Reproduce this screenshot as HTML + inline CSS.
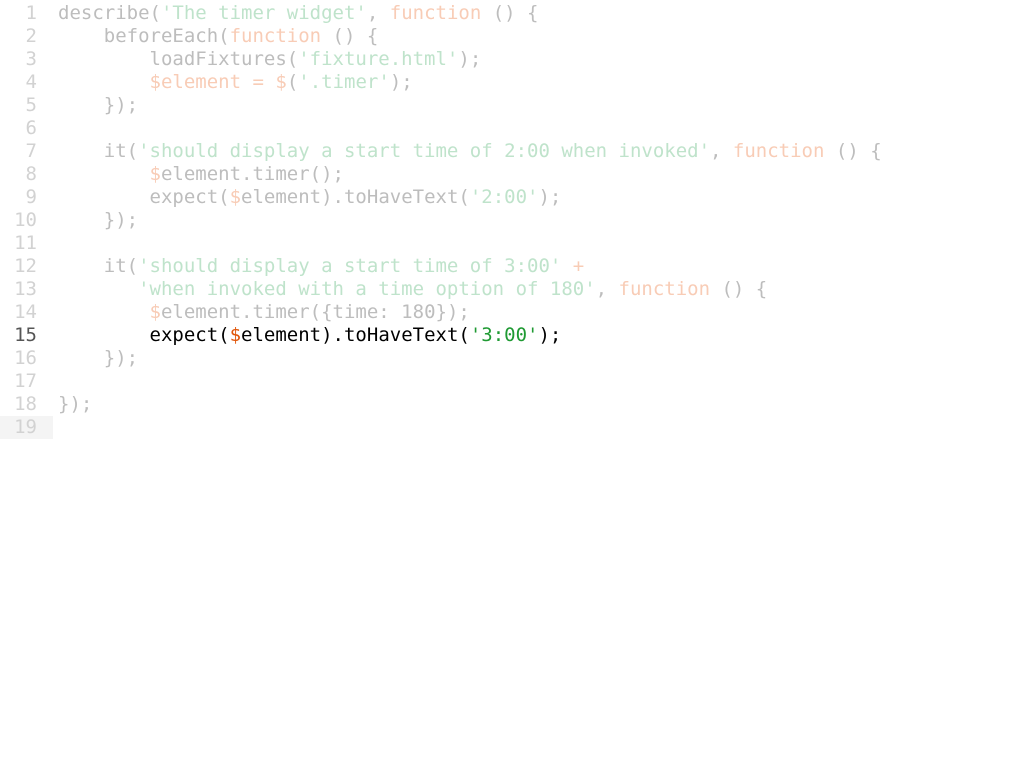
<!DOCTYPE html>
<html><head><style>
body{margin:0;background:#fff;width:1024px;height:768px;overflow:hidden}
.w{position:absolute;top:2px;left:0;font-family:"DejaVu Sans Mono","Liberation Mono",monospace;font-size:19px;line-height:23px;color:#bdbdbd}
.l{height:23px;position:relative;white-space:pre}
.n{display:inline-block;width:37px;text-align:right;color:#d2d2d2;margin-right:21px}
.s{color:#bfe3cb}.k{color:#f8ccb6}
.a{color:#000}.a .n{color:#555}.a .d{color:#e0560a}.a .s{color:#1f9a33}
.bg{position:absolute;left:0;top:0;width:53px;height:23px;background:#f4f4f4;z-index:-1}
</style></head><body>
<div class="w"><div class="l"><span class="n">1</span>describe(<span class="s">'The timer widget'</span>, <span class="k">function</span> () {</div><div class="l"><span class="n">2</span>    beforeEach(<span class="k">function</span> () {</div><div class="l"><span class="n">3</span>        loadFixtures(<span class="s">'fixture.html'</span>);</div><div class="l"><span class="n">4</span>        <span class="k">$element</span> <span class="k">=</span> <span class="k">$</span>(<span class="s">'.timer'</span>);</div><div class="l"><span class="n">5</span>    });</div><div class="l"><span class="n">6</span></div><div class="l"><span class="n">7</span>    it(<span class="s">'should display a start time of 2:00 when invoked'</span>, <span class="k">function</span> () {</div><div class="l"><span class="n">8</span>        <span class="k">$</span>element.timer();</div><div class="l"><span class="n">9</span>        expect(<span class="k">$</span>element).toHaveText(<span class="s">'2:00'</span>);</div><div class="l"><span class="n">10</span>    });</div><div class="l"><span class="n">11</span></div><div class="l"><span class="n">12</span>    it(<span class="s">'should display a start time of 3:00'</span> <span class="k">+</span></div><div class="l"><span class="n">13</span>       <span class="s">'when invoked with a time option of 180'</span>, <span class="k">function</span> () {</div><div class="l"><span class="n">14</span>        <span class="k">$</span>element.timer({time: 180});</div><div class="l a"><span class="n">15</span>        expect(<span class="d">$</span>element).toHaveText(<span class="s">'3:00'</span>);</div><div class="l"><span class="n">16</span>    });</div><div class="l"><span class="n">17</span></div><div class="l"><span class="n">18</span>});</div><div class="l"><span class="bg"></span><span class="n">19</span></div></div>
</body></html>
